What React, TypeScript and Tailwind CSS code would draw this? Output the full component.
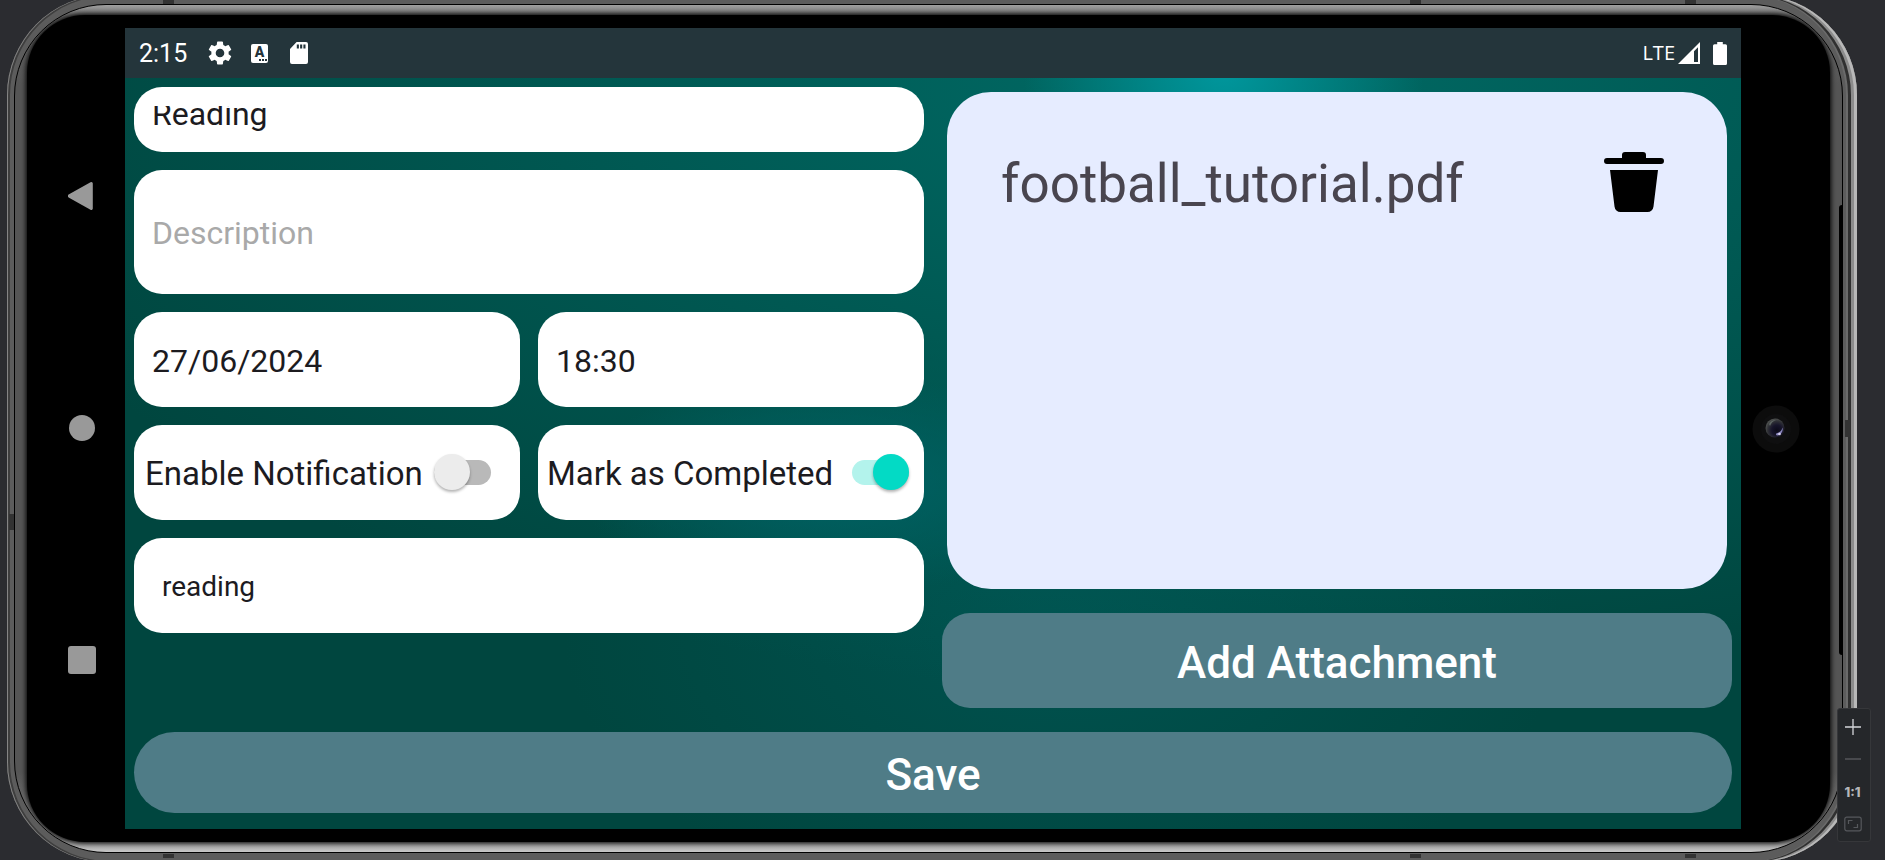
import { useState } from "react";
import type { ReactNode } from "react";

function GearIcon() {
  return (
    <svg viewBox="2 2 20 20" className="size-6" fill="currentColor" aria-hidden="true">
      <path d="M19.14 12.94c.04-.3.06-.61.06-.94 0-.32-.02-.64-.07-.94l2.03-1.58a.49.49 0 0 0 .12-.61l-1.92-3.32a.488.488 0 0 0-.59-.22l-2.39.96c-.5-.38-1.03-.7-1.62-.94l-.36-2.54a.484.484 0 0 0-.48-.41h-3.84c-.24 0-.43.17-.47.41l-.36 2.54c-.59.24-1.13.57-1.62.94l-2.39-.96c-.22-.08-.47 0-.59.22L2.74 8.87c-.12.21-.08.47.12.61l2.03 1.58c-.05.3-.09.63-.09.94s.02.64.07.94l-2.03 1.58a.49.49 0 0 0-.12.61l1.92 3.32c.12.22.37.29.59.22l2.39-.96c.5.38 1.03.7 1.62.94l.36 2.54c.05.24.24.41.48.41h3.84c.24 0 .44-.17.47-.41l.36-2.54c.59-.24 1.13-.56 1.62-.94l2.39.96c.22.08.47 0 .59-.22l1.92-3.32c.12-.22.07-.47-.12-.61l-2.01-1.58zM12 15.6c-1.98 0-3.6-1.62-3.6-3.6s1.62-3.6 3.6-3.6 3.6 1.62 3.6 3.6-1.62 3.6-3.6 3.6z" />
    </svg>
  );
}

function KeyboardBadge() {
  return (
    <span className="relative flex h-[19px] w-[17px] justify-center rounded-xs bg-white">
      <span className="text-[14px] leading-[17px] font-black text-[#24343b]">A</span>
      <span className="absolute right-px bottom-[2px] flex gap-px">
        <i className="size-[2px] bg-[#24343b]" />
        <i className="size-[2px] bg-[#24343b]" />
        <i className="size-[2px] bg-[#24343b]" />
      </span>
    </span>
  );
}

function SdCardIcon() {
  return (
    <svg viewBox="0 0 18 22" className="h-[22px] w-[18px]" fill="currentColor" aria-hidden="true">
      <path
        fillRule="evenodd"
        d="M6.6 0H16a2 2 0 0 1 2 2v18a2 2 0 0 1-2 2H2a2 2 0 0 1-2-2V7zM6.8 2.4v4.2h2.1V2.4zm3.3 0v4.2h2.1V2.4zm3.3 0v4.2h2.1V2.4z"
      />
    </svg>
  );
}

function SignalIcon() {
  return (
    <svg viewBox="0 0 22 22" className="size-[22px]" fill="currentColor" aria-hidden="true">
      <path fillRule="evenodd" d="M22 0v22H0zM20 5.2l-4 4V20h4z" />
    </svg>
  );
}

function BatteryIcon() {
  return (
    <svg viewBox="0 0 14 23" className="h-[23px] w-[14px]" fill="currentColor" aria-hidden="true">
      <path d="M4.2 0h5.6v2.2h2.7A1.5 1.5 0 0 1 14 3.700v17.800a1.500 1.500 0 0 1-1.500 1.500h-11A1.500 1.500 0 0 1 0 21.500v-17.800a1.500 1.500 0 0 1 1.500-1.500h2.700z" />
    </svg>
  );
}

function TrashIcon() {
  return (
    <svg viewBox="0 0 60 60" className="size-[60px]" fill="currentColor" aria-hidden="true">
      <path d="M21 0h18a3 3 0 0 1 3 3v3h15a3 3 0 0 1 0 6H3a3 3 0 0 1 0-6h15V3a3 3 0 0 1 3-3z" />
      <path d="M6 18h48l-4.500 36.500a6 6 0 0 1-6 5.500h-27a6 6 0 0 1-6-5.500z" />
    </svg>
  );
}

function StatusBar() {
  return (
    <header className="flex h-[50px] items-center justify-between bg-[#24353b] px-[14px] text-white">
      <div className="flex items-center">
        <time className="w-[69px] pt-0.5 text-[25px] leading-8">2:15</time>
        <GearIcon />
        <span className="ml-[19px]">
          <KeyboardBadge />
        </span>
        <span className="ml-[22px]">
          <SdCardIcon />
        </span>
      </div>
      <div className="flex items-center">
        <span className="mr-[3px] font-['Open_Sans'] text-[20px] leading-6">LTE</span>
        <SignalIcon />
        <span className="ml-[13px]">
          <BatteryIcon />
        </span>
      </div>
    </header>
  );
}

const field =
  "w-full min-w-0 bg-transparent pt-0.5 text-[32px] leading-9 text-[#1c1b1f] outline-none placeholder:text-[#a9a9a9]";

function Card({ className, children }: { className: string; children: ReactNode }) {
  return <div className={`flex rounded-[28px] bg-white ${className}`}>{children}</div>;
}

function Toggle({ id, checked, onChange }: { id: string; checked: boolean; onChange: (v: boolean) => void }) {
  return (
    <input
      id={id}
      type="checkbox"
      role="switch"
      checked={checked}
      onChange={(e) => onChange(e.target.checked)}
      className="relative h-[25px] w-[57px] shrink-0 appearance-none rounded-full bg-[#b9b9b9] before:absolute before:-top-[6px] before:left-0 before:size-9 before:rounded-full before:bg-[#ececec] before:shadow-[0_2px_3px_rgba(0,0,0,0.3)] checked:bg-[#b3f3ec] checked:before:left-[21px] checked:before:bg-[#03dac5]"
    />
  );
}

function DetailsForm() {
  const [notify, setNotify] = useState(false);
  const [done, setDone] = useState(true);
  return (
    <div className="flex min-w-0 flex-col gap-[18px]">
      <Card className="h-[65px] px-[18px] pt-[19px]">
        <div className="flex h-[25px] w-full items-end overflow-hidden">
          <input aria-label="Title" defaultValue="Reading" className={`${field} h-9 shrink-0`} />
        </div>
      </Card>
      <Card className="h-[124px] items-center px-[18px]">
        <input aria-label="Description" placeholder="Description" className={field} />
      </Card>
      <div className="grid grid-cols-2 gap-[18px]">
        <Card className="h-[95px] items-center px-[18px]">
          <input aria-label="Date" defaultValue="27/06/2024" className={field} />
        </Card>
        <Card className="h-[95px] items-center px-[18px]">
          <input aria-label="Time" defaultValue="18:30" className={field} />
        </Card>
        <Card className="h-[95px] items-center justify-between pr-[29px] pl-[11px]">
          <label htmlFor="notify" className="pt-0.5 text-[33px] leading-9 whitespace-nowrap text-[#1c1b1f]">
            Enable Notification
          </label>
          <Toggle id="notify" checked={notify} onChange={setNotify} />
        </Card>
        <Card className="h-[95px] items-center justify-between pr-[15px] pl-[9px]">
          <label htmlFor="done" className="pt-0.5 text-[33px] leading-9 whitespace-nowrap text-[#1c1b1f]">
            Mark as Completed
          </label>
          <Toggle id="done" checked={done} onChange={setDone} />
        </Card>
      </div>
      <Card className="h-[95px] items-center px-7">
        <input
          aria-label="Tag"
          defaultValue="reading"
          className="w-full bg-transparent pt-0.5 text-[28px] leading-9 text-[#1c1b1f] outline-none"
        />
      </Card>
    </div>
  );
}

function Attachments() {
  return (
    <div className="flex min-w-0 flex-col">
      <ul className="mx-[5px] mt-[5px] min-h-[497px] flex-1 rounded-[44px] bg-[#e6ecff] pt-[60px] pr-[63px] pl-[54px]">
        <li className="flex items-center justify-between">
          <span className="pt-1 text-[53px] leading-[56px] text-[#49454f]">football_tutorial.pdf</span>
          <button type="button" aria-label="Delete attachment" className="text-black">
            <TrashIcon />
          </button>
        </li>
      </ul>
      <button
        type="button"
        className="mt-6 h-[95px] rounded-[28px] bg-[#4f7c87] pt-1 text-[44px] leading-[50px] font-medium text-white"
      >
        Add Attachment
      </button>
    </div>
  );
}

function NavKeys() {
  return (
    <nav className="flex w-[98px] shrink-0 flex-col items-center justify-center gap-[204px] pb-0.5 pl-3 text-[#999]">
      <button type="button" aria-label="Back">
        <svg viewBox="0 0 28 28" className="size-7" fill="currentColor" aria-hidden="true">
          <path d="M0.600 12.600 22.500 0.300a1.500 1.500 0 0 1 2.300 1.300v24.800a1.500 1.500 0 0 1-2.300 1.300L0.600 15.400a1.600 1.600 0 0 1 0-2.800z" />
        </svg>
      </button>
      <button type="button" aria-label="Home" className="flex size-7 items-center justify-center">
        <span className="size-[26px] rounded-full bg-current" />
      </button>
      <button type="button" aria-label="Overview" className="size-7 rounded-[3px] bg-current" />
    </nav>
  );
}

function Camera() {
  return (
    <div className="flex w-[89px] shrink-0 items-center pl-[11px]">
      <svg viewBox="0 0 48 48" className="size-12" aria-hidden="true">
        <defs>
          <radialGradient id="lens" cx="0.6" cy="0.62" r="0.6">
            <stop offset="0" stopColor="#0b0a18" />
            <stop offset="0.45" stopColor="#16142a" />
            <stop offset="0.8" stopColor="#2f3036" />
            <stop offset="1" stopColor="#4a4d4c" />
          </radialGradient>
        </defs>
        <circle cx="24" cy="24" r="23.500" fill="#0c0c0c" />
        <circle cx="24" cy="24" r="15" fill="#0f0f10" />
        <circle cx="23" cy="23" r="9.500" fill="url(#lens)" />
        <path d="M17 19a8 8 0 0 1 7-4c-3 1-5 3-6 6z" fill="#5f6765" />
        <path d="M30.500 22.500c1 4-1.500 7.500-5.500 8-1.500-.6-1.200-2 .3-2.400 2.700-.6 4.400-2.600 5.200-5.600z" fill="#8b86bd" />
        <circle cx="27.500" cy="29" r="1.300" fill="#d9d4f2" />
      </svg>
    </div>
  );
}

function ZoomPanel() {
  return (
    <aside className="absolute right-[14px] bottom-[18px] flex h-[134px] w-[34px] flex-col items-center justify-between rounded-[3px] border border-[#36373a] bg-[#25272a] pt-[9px] pr-[3px] pb-[9px]">
      <button type="button" aria-label="Zoom in" className="text-[#d4d6da]">
        <svg viewBox="0 0 18 18" className="size-[18px]" stroke="currentColor" strokeWidth="1.300" aria-hidden="true">
          <path d="M9 1v16M1 9h16" />
        </svg>
      </button>
      <button type="button" aria-label="Zoom out" className="text-[#5c5e62]">
        <svg viewBox="0 0 18 18" className="size-[18px]" stroke="currentColor" strokeWidth="1.300" aria-hidden="true">
          <path d="M1 8h16" />
        </svg>
      </button>
      <button type="button" className="font-['Inter'] text-[13px] leading-[18px] font-extrabold text-[#b4b6ba]">
        1:1
      </button>
      <button type="button" aria-label="Fit to screen" className="text-[#56585c]">
        <svg viewBox="0 0 18 16" className="h-4 w-[18px]" fill="none" stroke="currentColor" strokeWidth="1.200" aria-hidden="true">
          <rect x="0.800" y="1.200" width="16.400" height="13.600" rx="2" />
          <path d="M4.500 8V4.500h4M13.500 8v3.500h-4" />
        </svg>
      </button>
    </aside>
  );
}

export default function App() {
  return (
    <div className="relative min-h-screen overflow-hidden bg-[#2b2c30] font-['Roboto',sans-serif]">
      <div className="relative -mt-[5px] -mb-[2px] mr-7 ml-[7px] rounded-[100px] bg-[#5c5c5c] pt-[9px] pr-[14px] pb-[9px] pl-[7px] shadow-[inset_1px_0_0_0_#858585,inset_-3px_0_0_0_#b8b8b8,inset_-6px_0_0_0_#8c8c8c,inset_2px_0_0_1px_#3e3e3e,inset_-9px_0_0_0_#303030,inset_-11px_0_0_0_#6a6a6a]">
        <i className="absolute top-[5px] left-[156px] h-[4px] w-[11px] bg-[#333]" />
        <i className="absolute top-[5px] right-[436px] h-[4px] w-[11px] bg-[#333]" />
        <i className="absolute top-[5px] right-[161px] h-[4px] w-[11px] bg-[#333]" />
        <i className="absolute bottom-[4px] left-[156px] h-[4px] w-[11px] bg-[#333]" />
        <i className="absolute right-[436px] bottom-[4px] h-[4px] w-[11px] bg-[#333]" />
        <i className="absolute right-[161px] bottom-[4px] h-[4px] w-[11px] bg-[#333]" />
        <i className="absolute top-[519px] left-[2px] h-[16px] w-[5px] bg-[#333]" />
        <i className="absolute top-[425px] right-[7px] h-[17px] w-[5px] bg-[#333]" />
        <div className="relative overflow-hidden rounded-[92px] border border-black bg-[linear-gradient(to_bottom,#a0a0a0_0,#666_12px,#555_80px,#555_calc(100%-80px),#888_calc(100%-12px),#c8c8c8_100%)] pt-[10px] pr-[12px] pb-[10px] pl-[12px]">
          <i className="absolute top-[200px] right-0 h-[450px] w-[3px] rounded-l-sm bg-black" />
          <div className="relative flex rounded-[58px] bg-black py-[13px] shadow-[0_0_5px_1px_#000]">
            <NavKeys />
            <main className="flex min-w-0 flex-1 flex-col bg-[#00463f] bg-[radial-gradient(ellipse_200px_200px_at_68%_5%,#00979d_0%,#00979d00_100%),radial-gradient(ellipse_260px_110px_at_44%_57%,#006264_0%,#00626400_100%),radial-gradient(ellipse_1300px_620px_at_68%_6%,#006a65_0%,#006a6500_100%),radial-gradient(ellipse_500px_300px_at_58%_75%,#00524f_0%,#00524f00_100%)]">
              <StatusBar />
              <div className="flex flex-col px-[9px] pt-[9px] pb-4">
                <div className="grid grid-cols-2 gap-[18px]">
                  <DetailsForm />
                  <Attachments />
                </div>
                <button
                  type="button"
                  className="mt-6 h-[81px] rounded-full bg-[#4f7c87] pt-1 text-[44px] leading-[50px] font-medium text-white"
                >
                  Save
                </button>
              </div>
            </main>
            <Camera />
          </div>
        </div>
      </div>
      <ZoomPanel />
    </div>
  );
}
